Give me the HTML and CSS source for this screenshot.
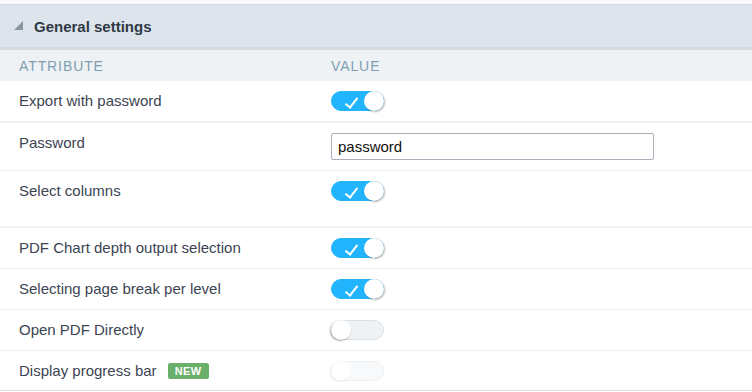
FILE: index.html
```html
<!DOCTYPE html>
<html>

<head>
  <link rel="stylesheet" href="styles.css">
</head>

<body>
  <div class="top-strip"></div>

  <div class="panel">
    <div class="panel-title">
      <span class="caret"></span>
      General settings
    </div>

    <table class="settings">
      <thead>
        <tr>
          <th class="attr">Attribute</th>
          <th>Value</th>
        </tr>
      </thead>
      <tbody>
        <tr class="thick">
          <td class="attr">Export with password</td>
          <td><span class="toggle on"></span></td>
        </tr>
        <tr>
          <td class="attr">Password</td>
          <td><input class="field" type="text" value="password"></td>
        </tr>
        <tr class="thick tall">
          <td class="attr">Select columns</td>
          <td><span class="toggle on"></span></td>
        </tr>
        <tr>
          <td class="attr">PDF Chart depth output selection</td>
          <td><span class="toggle on"></span></td>
        </tr>
        <tr>
          <td class="attr">Selecting page break per level</td>
          <td><span class="toggle on"></span></td>
        </tr>
        <tr>
          <td class="attr">Open PDF Directly</td>
          <td><span class="toggle"></span></td>
        </tr>
        <tr class="last">
          <td class="attr">Display progress bar <span class="badge">NEW</span></td>
          <td><span class="toggle disabled"></span></td>
        </tr>
      </tbody>
    </table>
  </div>
</body>

</html>
```

FILE: styles.css
```css
* {
  margin: 0;
  padding: 0;
  box-sizing: border-box;
}

body {
  width: 752px;
  height: 392px;
  overflow: hidden;
  background: #fff;
  font-family: "Liberation Sans", Arial, sans-serif;
  font-size: 15px;
  color: #3c4452;
}

.top-strip {
  height: 4px;
  background: #f7f9fa;
  border-bottom: 1px solid #d3dbe2;
  box-sizing: content-box;
}

.panel-title {
  display: flex;
  align-items: center;
  height: 42px;
  padding-left: 14px;
  background: #dee4eb;
  border-bottom: 3px solid #d2dae2;
  box-sizing: content-box;
  font-weight: bold;
  font-size: 15px;
  color: #2f3946;
}

.caret {
  width: 0;
  height: 0;
  margin-right: 11px;
  margin-top: -1px;
  border-left: 9px solid transparent;
  border-bottom: 9px solid #8c96a3;
}

.settings {
  width: 100%;
  border-collapse: collapse;
}

.settings th {
  height: 31px;
  text-align: left;
  font-weight: normal;
  font-size: 14px;
  letter-spacing: 0.9px;
  text-transform: uppercase;
  color: #7d9fb1;
  background: #eef2f5;
  padding: 0;
}

.settings th.attr,
.settings td.attr {
  width: 331px;
  padding-left: 19px;
}

.settings td {
  vertical-align: top;
  padding: 10px 0;
  line-height: 20px;
  border-bottom: 1px solid #eceff3;
}

.settings tr.thick td {
  border-bottom: 2px solid #eef1f5;
}

.settings tr.tall td {
  padding-bottom: 25px;
}

.settings tr.last td {
  padding-bottom: 9px;
  border-bottom: 1px solid #d6dde3;
}

.field {
  display: block;
  width: 323px;
  height: 27px;
  padding: 0 6px;
  border: 1px solid #a9b0bb;
  border-radius: 2px;
  font-family: "Liberation Sans", Arial, sans-serif;
  font-size: 15px;
  color: #111;
}

.toggle {
  position: relative;
  display: block;
  width: 53px;
  height: 20px;
  border-radius: 10px;
  background: #eef2f5;
  border: 1px solid #dbe1e6;
}

.toggle::after {
  content: "";
  position: absolute;
  top: -1px;
  left: -1px;
  width: 20px;
  height: 20px;
  border-radius: 50%;
  background: #fff;
  box-shadow: -1px 1px 2px rgba(0, 0, 0, 0.35);
}

.toggle.on {
  background: #22b5fe;
  border-color: #22b5fe;
}

.toggle.on::after {
  left: auto;
  right: -1px;
  box-shadow: 1px 1px 2px rgba(0, 0, 0, 0.3);
}

.toggle.on::before {
  content: "";
  position: absolute;
  left: 16px;
  top: 3px;
  width: 5px;
  height: 11px;
  border-right: 2.5px solid #fff;
  border-bottom: 2px solid #fff;
  transform: rotate(38deg);
}

.toggle.disabled {
  background: #f7f9fa;
  border-color: #eef1f4;
}

.toggle.disabled::after {
  box-shadow: -1px 1px 2px rgba(0, 0, 0, 0.1);
}

.badge {
  display: inline-block;
  margin-left: 7px;
  padding: 0 7px;
  height: 16px;
  line-height: 16px;
  vertical-align: 1px;
  border-radius: 2px;
  background: #6aaf6a;
  color: #fff;
  font-size: 11px;
  font-weight: bold;
  letter-spacing: 0.4px;
}
```
